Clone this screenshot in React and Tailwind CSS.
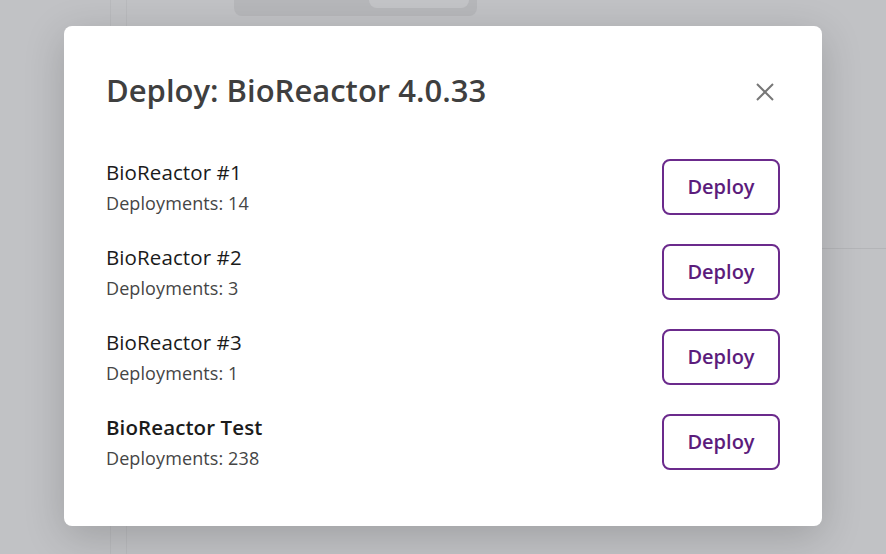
import React from "react";

const rows = [
  { name: "BioReactor #1", count: 14 },
  { name: "BioReactor #2", count: 3 },
  { name: "BioReactor #3", count: 1 },
  { name: "BioReactor Test", count: 238, strong: true },
];

export default function App() {
  return (
    <div
      className="relative w-[886px] h-[554px] overflow-hidden bg-[#c1c2c5] pt-[26px] pl-[64px]"
      style={{ fontFamily: "'Open Sans', 'Noto Sans', sans-serif" }}
    >
      {/* faint page behind the overlay */}
      <div className="absolute left-[110px] top-0 h-full w-px bg-[#b9babd]" />
      <div className="absolute left-[126px] top-0 h-full w-px bg-[#b9babd]" />
      <div className="absolute left-[234px] top-[-10px] w-[243px] h-[26px] rounded-b-[8px] bg-[#b6b7ba]">
        <div className="absolute left-[135px] top-0 w-[100px] h-[18px] rounded-b-[8px] bg-[#c3c4c7]" />
      </div>
      <div className="absolute left-[822px] top-[248px] w-[64px] h-px bg-[#b4b5b8]" />

      <div className="relative w-[758px] h-[500px] rounded-[8px] bg-white shadow-[0_10px_40px_rgba(0,0,0,0.18)] px-[42px] pt-[46px]">
        <div className="flex items-center justify-between h-[40px]">
          <h2 className="pb-[4px] text-[31px] leading-[40px] font-semibold text-[#3f3f3f] tracking-[0px]">
            Deploy: BioReactor 4.0.33
          </h2>
          <button className="w-[30px] h-[30px] flex items-center justify-center text-[#777]">
            <svg width="20" height="20" viewBox="0 0 20 20" fill="none" stroke="currentColor" strokeWidth="2">
              <path d="M2 2 L18 18 M18 2 L2 18" />
            </svg>
          </button>
        </div>

        <div className="mt-[47px] flex flex-col gap-[29px]">
          {rows.map((r) => (
            <div key={r.name} className="flex items-center justify-between h-[56px]">
              <div className="flex flex-col">
                <span
                  className={
                    r.strong
                      ? "text-[20.5px] leading-[26px] font-semibold text-[#1b1b1b] tracking-[0.1px]"
                      : "text-[20.5px] leading-[26px] font-normal text-[#1b1b1b] tracking-[0.1px]"
                  }
                >
                  {r.name}
                </span>
                <span className="mt-[7px] text-[18px] leading-[23px] text-[#454545] tracking-[0.1px]">
                  Deployments: {r.count}
                </span>
              </div>
              <button className="w-[118px] h-[56px] rounded-[8px] border-2 border-[#6b2a8c] text-[#5c1c7c] text-[20px] font-semibold">
                Deploy
              </button>
            </div>
          ))}
        </div>
      </div>
    </div>
  );
}
